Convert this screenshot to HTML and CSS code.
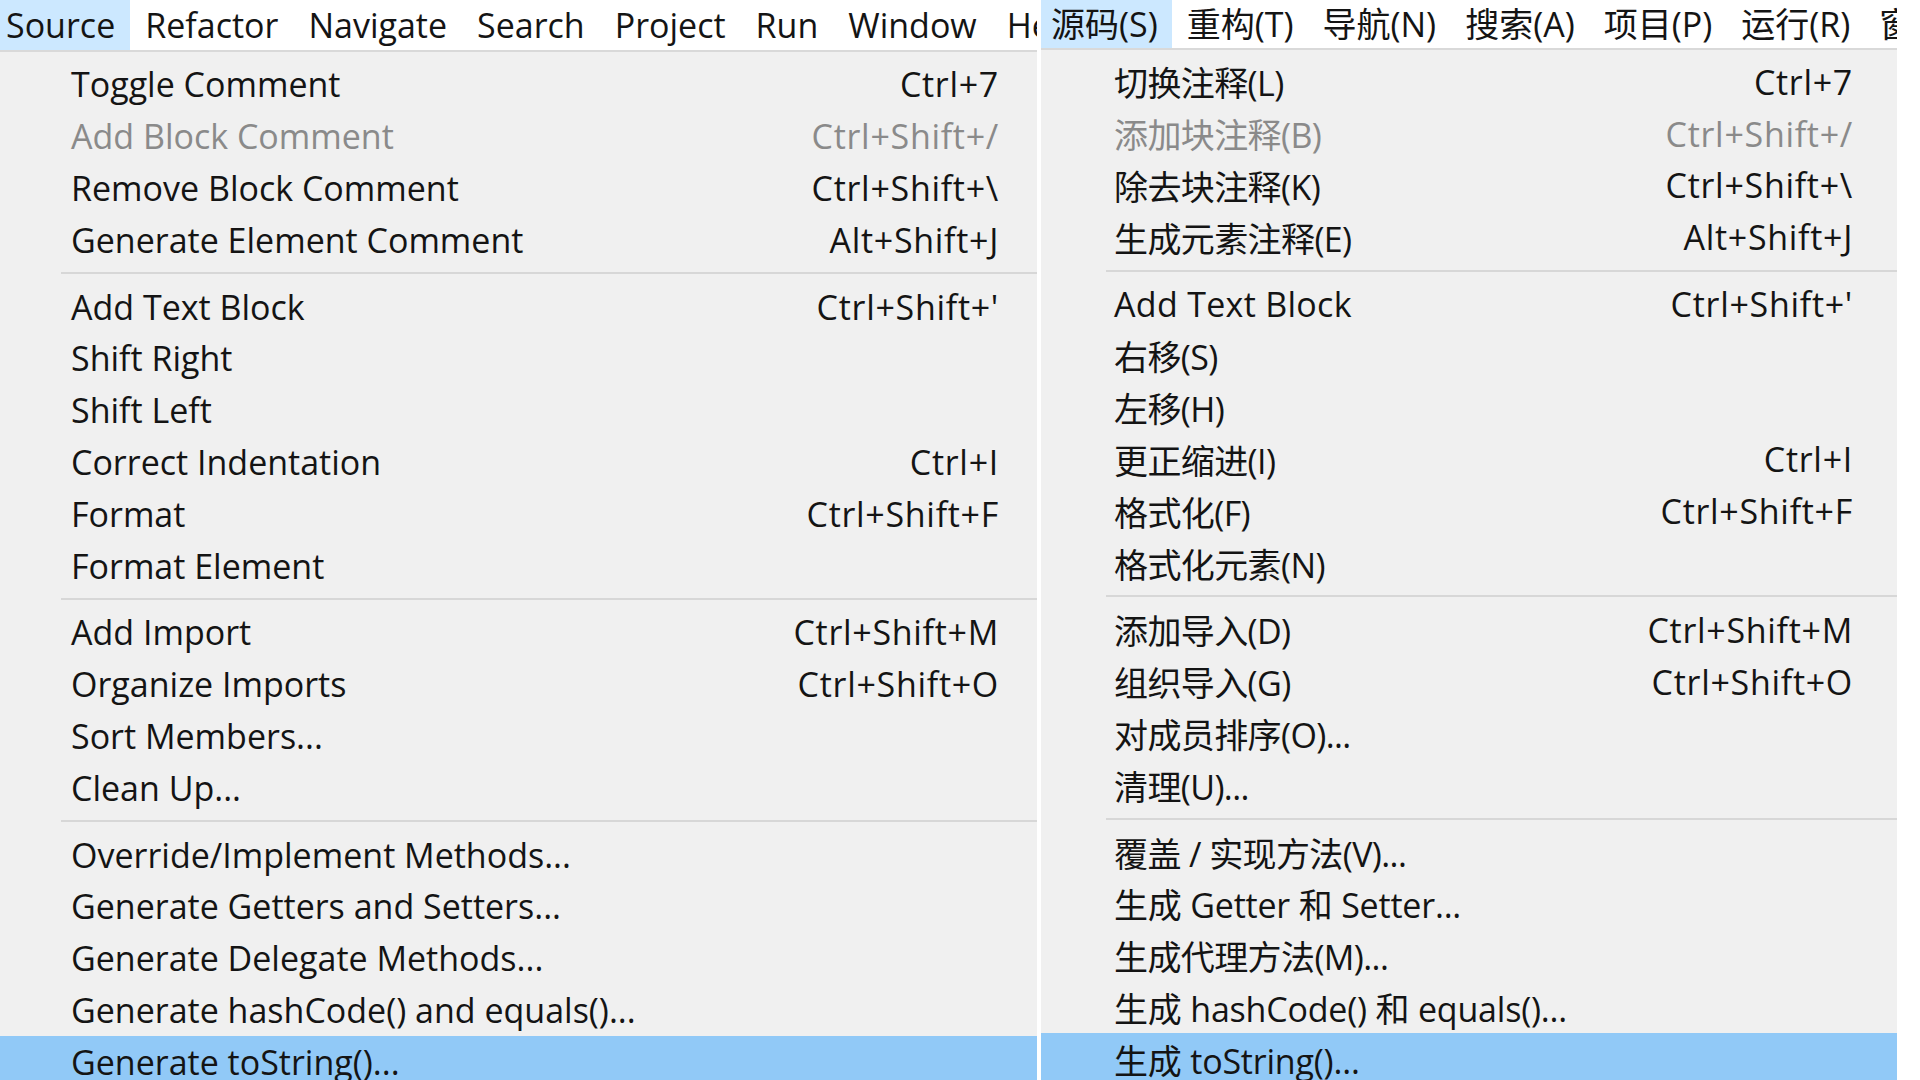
FILE: index.html
```html
<!DOCTYPE html>
<html lang="en">
<head>
<meta charset="utf-8">
<title>Source menu</title>
<link rel="stylesheet" href="styles.css">
</head>
<body>
<div class="screen">
  <section class="panel panel-en">
    <nav class="menubar">
      <span class="mi active">Source</span>
      <span class="mi">Refactor</span>
      <span class="mi">Navigate</span>
      <span class="mi">Search</span>
      <span class="mi">Project</span>
      <span class="mi">Run</span>
      <span class="mi">Window</span>
      <span class="mi">Help</span>
    </nav>
    <ul class="menu">
      <li class="item"><span class="label">Toggle Comment</span><span class="key">Ctrl+7</span></li>
      <li class="item disabled"><span class="label">Add Block Comment</span><span class="key">Ctrl+Shift+/</span></li>
      <li class="item"><span class="label">Remove Block Comment</span><span class="key">Ctrl+Shift+\</span></li>
      <li class="item"><span class="label">Generate Element Comment</span><span class="key">Alt+Shift+J</span></li>
      <li class="sep"></li>
      <li class="item"><span class="label">Add Text Block</span><span class="key">Ctrl+Shift+'</span></li>
      <li class="item"><span class="label">Shift Right</span></li>
      <li class="item"><span class="label">Shift Left</span></li>
      <li class="item"><span class="label">Correct Indentation</span><span class="key">Ctrl+I</span></li>
      <li class="item"><span class="label">Format</span><span class="key">Ctrl+Shift+F</span></li>
      <li class="item"><span class="label">Format Element</span></li>
      <li class="sep"></li>
      <li class="item"><span class="label">Add Import</span><span class="key">Ctrl+Shift+M</span></li>
      <li class="item"><span class="label">Organize Imports</span><span class="key">Ctrl+Shift+O</span></li>
      <li class="item"><span class="label">Sort Members...</span></li>
      <li class="item"><span class="label">Clean Up...</span></li>
      <li class="sep"></li>
      <li class="item"><span class="label">Override/Implement Methods...</span></li>
      <li class="item"><span class="label">Generate Getters and Setters...</span></li>
      <li class="item"><span class="label">Generate Delegate Methods...</span></li>
      <li class="item"><span class="label">Generate hashCode() and equals()...</span></li>
      <li class="item hover"><span class="label">Generate toString()...</span></li>
    </ul>
  </section>
  <div class="gap"></div>
  <section class="panel panel-zh" lang="zh-CN">
    <nav class="menubar">
      <span class="mi active">源码(S)</span>
      <span class="mi">重构(T)</span>
      <span class="mi">导航(N)</span>
      <span class="mi">搜索(A)</span>
      <span class="mi">项目(P)</span>
      <span class="mi">运行(R)</span>
      <span class="mi">窗口(W)</span>
    </nav>
    <ul class="menu">
      <li class="item"><span class="label">切换注释(L)</span><span class="key">Ctrl+7</span></li>
      <li class="item disabled"><span class="label">添加块注释(B)</span><span class="key">Ctrl+Shift+/</span></li>
      <li class="item"><span class="label">除去块注释(K)</span><span class="key">Ctrl+Shift+\</span></li>
      <li class="item"><span class="label">生成元素注释(E)</span><span class="key">Alt+Shift+J</span></li>
      <li class="sep"></li>
      <li class="item"><span class="label latin">Add Text Block</span><span class="key">Ctrl+Shift+'</span></li>
      <li class="item"><span class="label">右移(S)</span></li>
      <li class="item"><span class="label">左移(H)</span></li>
      <li class="item"><span class="label">更正缩进(I)</span><span class="key">Ctrl+I</span></li>
      <li class="item"><span class="label">格式化(F)</span><span class="key">Ctrl+Shift+F</span></li>
      <li class="item"><span class="label">格式化元素(N)</span></li>
      <li class="sep"></li>
      <li class="item"><span class="label">添加导入(D)</span><span class="key">Ctrl+Shift+M</span></li>
      <li class="item"><span class="label">组织导入(G)</span><span class="key">Ctrl+Shift+O</span></li>
      <li class="item"><span class="label">对成员排序(O)...</span></li>
      <li class="item"><span class="label">清理(U)...</span></li>
      <li class="sep"></li>
      <li class="item"><span class="label">覆盖 / 实现方法(V)...</span></li>
      <li class="item"><span class="label mixed">生成 Getter 和 Setter...</span></li>
      <li class="item"><span class="label">生成代理方法(M)...</span></li>
      <li class="item"><span class="label mixed">生成 hashCode() 和 equals()...</span></li>
      <li class="item hover"><span class="label mixed">生成 toString()...</span></li>
    </ul>
  </section>
</div>
</body>
</html>
```
FILE: styles.css
```css
* {
  box-sizing: border-box;
  margin: 0;
  padding: 0;
}

html,
body {
  width: 1920px;
  height: 1080px;
  overflow: hidden;
  background: #ffffff;
}

body {
  font-family: "Open Sans", "Noto Sans CJK SC", sans-serif;
  font-size: 34px;
  color: #141414;
}

.screen {
  display: flex;
  height: 1080px;
}

.panel {
  display: flex;
  flex-direction: column;
  overflow: hidden;
  background: #f0f0f0;
  flex: none;
}

.panel-en {
  width: 1037px;
}

.gap {
  width: 4px;
  flex: none;
  background: #ffffff;
}

.panel-zh {
  width: 856px;
}

.menubar {
  display: flex;
  flex: none;
  height: 52px;
  background: #ffffff;
  border-bottom: 2px solid #d9d9d9;
  white-space: nowrap;
}

.panel-zh .menubar {
  height: 50px;
}

.mi {
  padding: 0 15px;
  line-height: 51px;
}

.panel-zh .mi {
  padding: 0 14.5px;
  line-height: 49px;
}

.mi:first-child {
  padding-left: 6px;
}

.panel-zh .mi:first-child {
  padding-left: 10px;
}

.mi.active {
  background: #cce8ff;
}

.menu {
  list-style: none;
  padding-top: 6.5px;
}

.panel-zh .menu {
  padding-top: 6px;
}

.item {
  display: flex;
  align-items: center;
  justify-content: space-between;
  height: 51.8px;
  padding-left: 71px;
  padding-right: 38px;
  white-space: nowrap;
}

.panel-zh .item {
  padding-left: 73px;
  padding-right: 44px;
}

.panel-zh .label {
  letter-spacing: -0.6px;
}

.panel-zh .label.mixed {
  letter-spacing: -0.2px;
}

.panel-zh .label.latin {
  letter-spacing: 0.3px;
}

.key {
  letter-spacing: 0.7px;
}

.item.disabled {
  color: #8a8a8a;
}

.item.hover {
  background: #91c9f7;
}

.sep {
  display: flex;
  align-items: center;
  height: 15px;
  margin-left: 61px;
}

.panel-zh .sep {
  margin-left: 65px;
}

.sep::after {
  content: "";
  flex: 1;
  height: 2px;
  background: #d7d7d7;
}
```
